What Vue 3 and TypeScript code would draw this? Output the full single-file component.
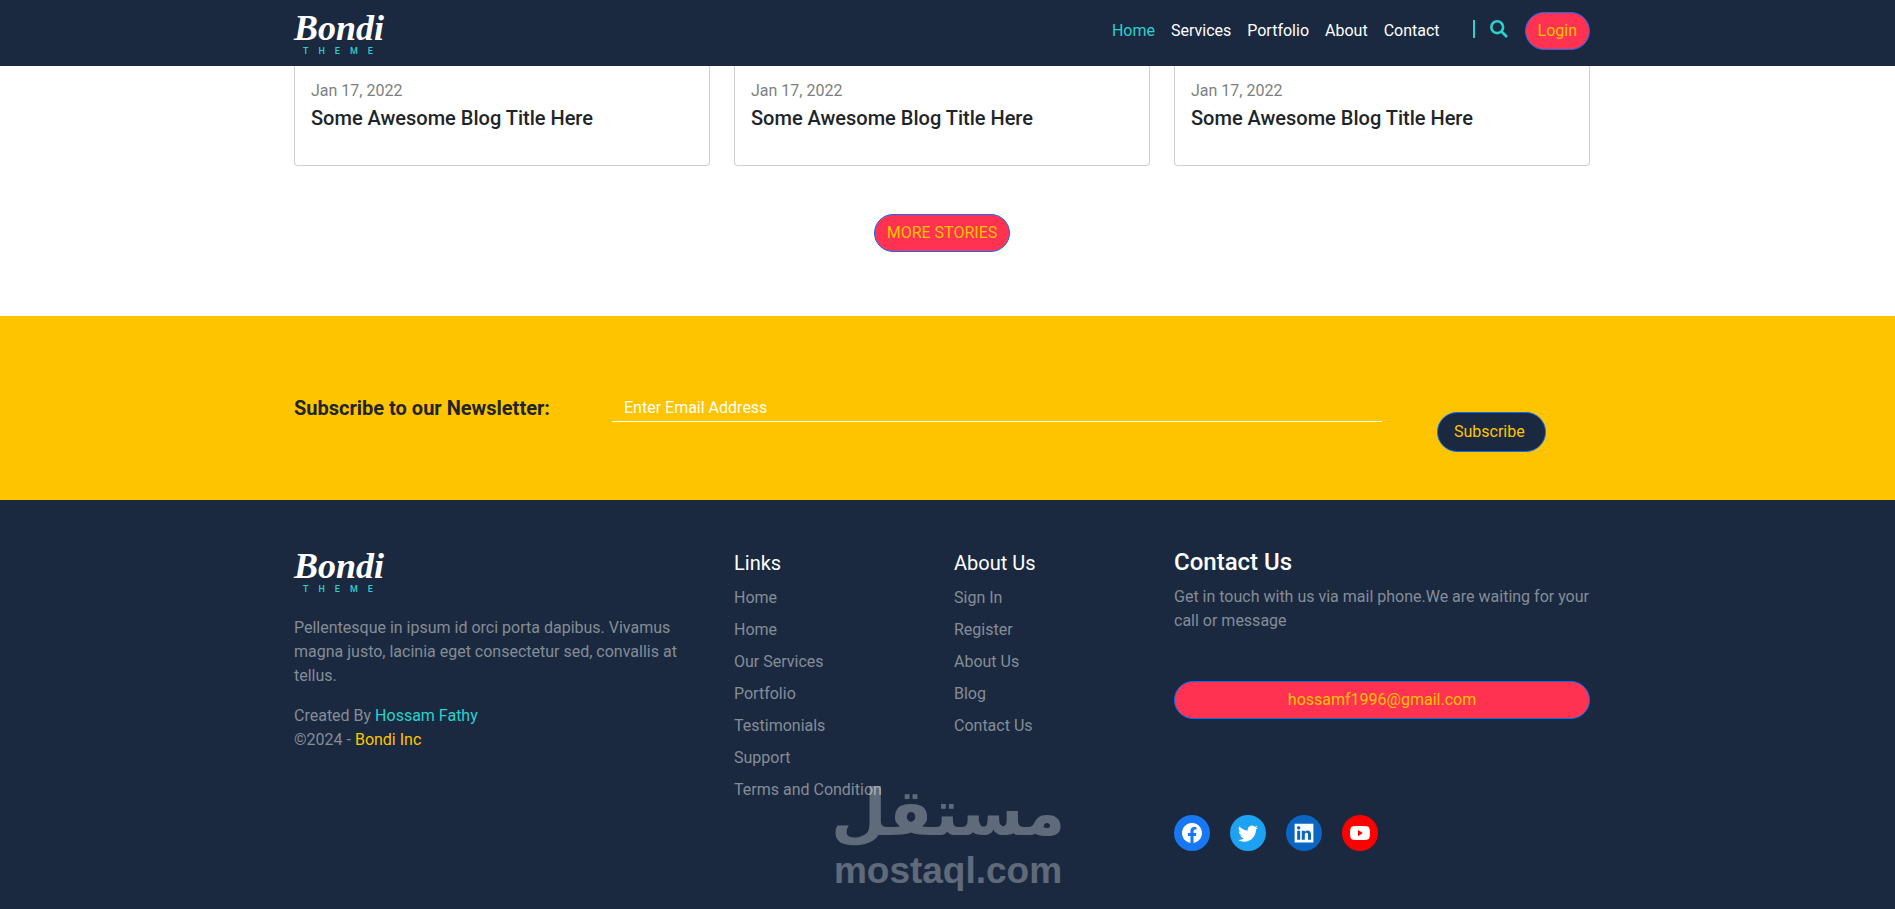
<script setup lang="ts">
interface NavItem { label: string; active?: boolean }
interface Post { id: number; date: string; title: string }

const nav: NavItem[] = [
  { label: 'Home', active: true },
  { label: 'Services' },
  { label: 'Portfolio' },
  { label: 'About' },
  { label: 'Contact' },
]

const posts: Post[] = [1, 2, 3].map((id) => ({
  id,
  date: 'Jan 17, 2022',
  title: 'Some Awesome Blog Title Here',
}))

const linkColumns = [
  {
    title: 'Links',
    items: ['Home', 'Home', 'Our Services', 'Portfolio', 'Testimonials', 'Support', 'Terms and Condition'],
  },
  { title: 'About Us', items: ['Sign In', 'Register', 'About Us', 'Blog', 'Contact Us'] },
]

const socials = [
  {
    name: 'facebook',
    path: 'M16 8.049c0-4.446-3.582-8.05-8-8.05C3.58 0-.002 3.603-.002 8.05c0 4.017 2.926 7.347 6.75 7.951v-5.625h-2.03V8.05H6.75V6.275c0-2.017 1.195-3.131 3.022-3.131.876 0 1.791.157 1.791.157v1.98h-1.009c-.993 0-1.303.621-1.303 1.258v1.51h2.218l-.354 2.326H9.25V16c3.824-.604 6.75-3.934 6.75-7.951z',
  },
  {
    name: 'twitter',
    path: 'M5.026 15c6.038 0 9.341-5.003 9.341-9.334 0-.14 0-.282-.006-.422A6.685 6.685 0 0 0 16 3.542a6.658 6.658 0 0 1-1.889.518 3.301 3.301 0 0 0 1.447-1.817 6.533 6.533 0 0 1-2.087.793A3.286 3.286 0 0 0 7.875 6.03a9.325 9.325 0 0 1-6.767-3.429 3.289 3.289 0 0 0 1.018 4.382A3.323 3.323 0 0 1 .64 6.575v.045a3.288 3.288 0 0 0 2.632 3.218 3.203 3.203 0 0 1-.865.115 3.23 3.23 0 0 1-.614-.057 3.283 3.283 0 0 0 3.067 2.277A6.588 6.588 0 0 1 .78 13.58a6.32 6.32 0 0 1-.78-.045A9.344 9.344 0 0 0 5.026 15z',
  },
  {
    name: 'linkedin',
    path: 'M0.5 0.5h15v15h-15zM4.943 13.394V6.169H2.542v7.225h2.401zM3.743 5.182c.837 0 1.358-.554 1.358-1.248-.015-.709-.52-1.248-1.342-1.248-.822 0-1.359.54-1.359 1.248 0 .694.521 1.248 1.327 1.248h.016zM8.65 13.394V9.359c0-.216.016-.432.08-.586.173-.431.568-.878 1.232-.878.869 0 1.216.662 1.216 1.634v3.865h2.401V9.25c0-2.22-1.184-3.252-2.764-3.252-1.274 0-1.845.7-2.165 1.193V6.169h-2.4c.03.678 0 7.225 0 7.225z',
  },
  {
    name: 'youtube',
    path: 'M2.5 2.6Q8 2.1 13.5 2.6Q15.5 2.8 15.7 4.8Q16.2 8 15.7 11.2Q15.5 13.2 13.5 13.4Q8 13.9 2.5 13.4Q0.5 13.2 0.3 11.2Q-0.2 8 0.3 4.8Q0.5 2.8 2.5 2.6ZM6.4 5.5V10.5L10.3 8Z',
  },
]
</script>

<template>
  <div class="page">
    <header class="topbar">
      <div class="container topbar-inner">
        <a href="#" class="brand" aria-label="Bondi Theme">
          <svg viewBox="0 0 90 48" class="logo">
            <text x="0" y="33" class="logo-name">Bondi</text>
            <text x="9" y="47" class="logo-sub">THEME</text>
          </svg>
        </a>
        <nav class="menu">
          <a v-for="item in nav" :key="item.label" href="#" :class="{ active: item.active }">{{ item.label }}</a>
        </nav>
        <div class="tools">
          <span class="divider"></span>
          <button class="search" type="button" aria-label="Search">
            <svg viewBox="0 0 18 18"><circle cx="7.2" cy="7.2" r="5.9" /><path d="M11.5 11.5L17 17" /></svg>
          </button>
        </div>
        <button class="pill" type="button">Login</button>
      </div>
    </header>

    <main class="blog container">
      <div class="posts">
        <article v-for="post in posts" :key="post.id" class="post">
          <p>{{ post.date }}</p>
          <h2>{{ post.title }}</h2>
        </article>
      </div>
      <button class="pill" type="button">MORE STORIES</button>
    </main>

    <section class="newsletter">
      <form class="container newsletter-inner" @submit.prevent>
        <label for="email">Subscribe to our Newsletter:</label>
        <input id="email" type="email" placeholder="Enter Email Address" />
        <div class="submit"><button class="pill dark" type="submit">Subscribe</button></div>
      </form>
    </section>

    <footer class="footer">
      <div class="container footer-grid">
        <div class="about">
          <a href="#" class="brand" aria-label="Bondi Theme">
            <svg viewBox="0 0 90 48" class="logo">
              <text x="0" y="33" class="logo-name">Bondi</text>
              <text x="9" y="47" class="logo-sub">THEME</text>
            </svg>
          </a>
          <p>Pellentesque in ipsum id orci porta dapibus. Vivamus magna justo, lacinia eget consectetur sed, convallis at tellus.</p>
          <p>Created By <a href="#" class="teal">Hossam Fathy</a><br />©2024 - <a href="#" class="gold">Bondi Inc</a></p>
        </div>
        <div v-for="col in linkColumns" :key="col.title" class="links">
          <h3>{{ col.title }}</h3>
          <ul>
            <li v-for="(item, i) in col.items" :key="i"><a href="#">{{ item }}</a></li>
          </ul>
        </div>
        <div class="contact">
          <h2>Contact Us</h2>
          <p>Get in touch with us via mail phone.We are waiting for your call or message</p>
          <button class="pill wide" type="button">hossamf1996@gmail.com</button>
          <div class="socials">
            <a v-for="s in socials" :key="s.name" href="#" :class="s.name" :aria-label="s.name">
              <svg viewBox="0 0 16 16"><path fill-rule="evenodd" :d="s.path" /></svg>
            </a>
          </div>
        </div>
      </div>
    </footer>

    <div class="watermark">
      <svg viewBox="0 0 230 106">
        <text x="115" y="48" class="mark-ar" text-anchor="middle">مستقل</text>
        <text x="115" y="96" class="mark-en" text-anchor="middle">mostaql.com</text>
      </svg>
    </div>
  </div>
</template>

<style>
body { margin: 0; background: #1a2940; }
</style>

<style scoped>
.page {
  position: relative;
  min-height: 100vh;
  padding-right: 11px;
  overflow: hidden;
  background: #1a2940;
  color: #212529;
  font: 16px/24px Roboto, "Liberation Sans", sans-serif;
}
.page, .page * { box-sizing: border-box; }
a { color: inherit; text-decoration: none; }
p, h2, h3, ul { margin: 0; padding: 0; }
ul { list-style: none; }
button, input { font: inherit; }

.container { width: 100%; max-width: 1320px; margin: 0 auto; padding: 0 12px; }
.topbar, .blog, .newsletter, .footer { position: relative; }

.topbar-inner { display: flex; align-items: center; height: 66px; padding-bottom: 5px; }
.brand { display: block; }
.logo { display: block; width: 90px; height: 48px; overflow: visible; }
.logo-name { font: italic bold 36px "Liberation Serif", serif; fill: #fff; }
.logo-sub { font: 500 9px Roboto, sans-serif; fill: #2ad1cd; letter-spacing: 10px; }
.menu { display: flex; gap: 16px; margin-left: auto; color: #fff; }
.menu .active { color: #2ad1cd; }
.tools { display: flex; gap: 15px; margin: 0 17px 0 33px; padding-bottom: 4px; }
.divider { width: 2px; height: 18px; background: #2ad1cd; }
.search { width: 18px; height: 18px; padding: 0; border: 0; background: none; }
.search svg { display: block; fill: none; stroke: #2ad1cd; stroke-width: 2.6; }

.pill {
  padding: 6px 12px;
  border: 1px solid #0d6efd;
  border-radius: 20px;
  background: #ff3251;
  color: #ffc400;
  cursor: pointer;
}

.blog { display: flex; flex-direction: column; align-items: center; padding-bottom: 64px; }
.blog::before, .newsletter::before {
  content: "";
  position: absolute;
  inset: 0 -100vw;
  background: #fff;
}
.blog > * { position: relative; }
.posts { display: grid; grid-template-columns: repeat(3, 1fr); gap: 24px; width: 100%; margin-bottom: 48px; }
.post { padding: 13px 16px 35px; border: 1px solid #cfcfd1; border-top: 0; border-radius: 0 0 4px 4px; }
.post p { margin-bottom: 3px; color: #7c7f80; }
.post h2 { font-size: 20px; line-height: 24px; font-weight: 500; }

.newsletter { padding: 80px 0 48px; }
.newsletter::before { background: #ffc400; }
.newsletter-inner { position: relative; display: grid; grid-template-columns: 294fr 770fr 184fr; column-gap: 24px; align-items: start; }
.newsletter label { font-size: 20px; font-weight: 700; }
.newsletter input {
  width: 100%;
  height: 26px;
  padding: 0 12px 2px;
  border: 0;
  border-bottom: 1px solid #fff;
  border-radius: 0;
  background: transparent;
  color: #fff;
  outline: 0;
}
.newsletter input::placeholder { color: #fff; opacity: 1; }
.submit { padding: 16px 0 0 31px; }
.pill.dark { padding: 7px 20px 7px 16px; background: #1a2940; }

.footer { padding: 45px 0 52px; color: #858d96; }
.footer-grid { display: grid; grid-template-columns: repeat(12, 1fr); column-gap: 24px; }
.about, .contact { grid-column: span 4; }
.links { grid-column: span 2; white-space: nowrap; }
.links, .contact { padding-top: 3px; }
.about p { margin-top: 16px; }
.about .brand + p { margin-top: 23px; }
.teal { color: #2ad1cd; }
.gold { color: #ffc400; }
.links h3 { margin: 3px 0 7px; color: #fff; font-size: 20px; line-height: 24px; font-weight: 400; }
.links li { padding: 4px 0; }
.contact h2 { margin-bottom: 8px; color: #fff; font-size: 24px; line-height: 29px; font-weight: 500; }
.wide { display: block; width: 100%; margin-top: 48px; }
.socials { display: flex; gap: 20px; margin-top: 96px; }
.socials a { display: grid; place-items: center; width: 36px; height: 36px; border-radius: 50%; }
.socials svg { width: 20px; height: 20px; fill: #fff; }
.facebook { background: #1877f2; }
.twitter { background: #1da1f2; }
.linkedin { background: #0a66c2; }
.youtube { background: #f00; }

.watermark { position: absolute; left: 50%; bottom: 16px; width: 230px; margin-left: -115px; opacity: 0.3; }
.watermark svg { display: block; overflow: visible; fill: #fff; }
.mark-ar { font: bold 64px "DejaVu Sans", sans-serif; }
.mark-en { font: bold 37px "Liberation Sans", sans-serif; }
</style>
